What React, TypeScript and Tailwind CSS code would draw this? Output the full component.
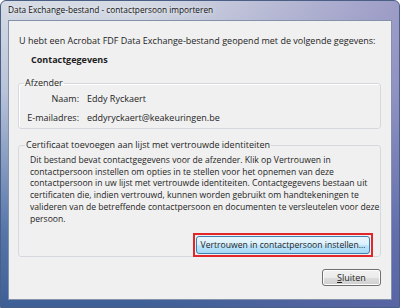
export default function App() {
  return (
    <div className="w-[400px] h-[308px] flex flex-col px-[7px] pb-[7px] rounded-t-[6px] overflow-hidden font-['Open_Sans',sans-serif] text-[9px] text-[#1e1e1e] bg-[image:linear-gradient(to_right,rgba(255,255,255,0)_35%,rgba(110,105,175,0.55)_100%),linear-gradient(to_bottom,#d6dbe4_0%,#b8c2d8_30%,#5676aa_75%,#3e5f96_100%)] border border-[#4a5f86]">
      <div className="h-[19px] flex items-center text-[8.3px] text-[#111] [text-shadow:0_0_4px_#ffffff]">
        Data Exchange-bestand - contactpersoon importeren
      </div>
      <div className="flex-1 flex flex-col bg-[#f0f0f0] border border-[#8491aa] pl-[9px] pr-[10px]">
        <p className="mt-[14px] ml-[1px] leading-[12px]">
          U hebt een Acrobat FDF Data Exchange-bestand geopend met de volgende gegevens:
        </p>
        <p className="mt-[7px] ml-[13px] leading-[12px] font-bold">Contactgegevens</p>

        <fieldset className="mt-[11px] h-[52px] border border-[#d5d9de] rounded-[3px] shadow-[inset_1px_1px_0_#ffffff]">
          <legend className="ml-[5px] px-[1px] leading-[12px]">Afzender</legend>
          <div className="grid grid-cols-[60px_1fr] gap-x-[8px] gap-y-[7px] mt-[4px] leading-[12px]">
            <span className="text-right">Naam:</span>
            <span>Eddy Ryckaert</span>
            <span className="text-right">E-mailadres:</span>
            <span>eddyryckaert@keakeuringen.be</span>
          </div>
        </fieldset>

        <fieldset className="mt-[10px] h-[118px] border border-[#d5d9de] rounded-[3px] flex flex-col">
          <legend className="ml-[6px] px-[1px] leading-[12px]">
            Certificaat toevoegen aan lijst met vertrouwde identiteiten
          </legend>
          <p className="mt-[4px] ml-[11px] text-[8.6px] leading-[11.7px] whitespace-nowrap">
            Dit bestand bevat contactgegevens voor de afzender. Klik op Vertrouwen in
            <br />
            contactpersoon instellen om opties in te stellen voor het opnemen van deze
            <br />
            contactpersoon in uw lijst met vertrouwde identiteiten. Contactgegevens bestaan uit
            <br />
            certificaten die, indien vertrouwd, kunnen worden gebruikt om handtekeningen te
            <br />
            valideren van de betreffende contactpersoon en documenten te versleutelen voor deze
            <br />
            persoon.
          </p>
          <div className="flex justify-end mt-[8px] mr-[7px]">
            <div className="border-2 border-[#e3262a] p-[1px]">
              <button className="w-[174px] h-[18px] rounded-[3px] border border-[#3c7fb1] bg-[linear-gradient(to_bottom,#eaf6fd_0%,#d9f0fc_50%,#bee6fd_51%,#a7d9f5_100%)] leading-[12px] text-[8.6px] whitespace-nowrap text-[#1e1e1e]">
                Vertrouwen in contactpersoon instellen...
              </button>
            </div>
          </div>
        </fieldset>

        <div className="flex justify-end mt-[12px]">
          <button className="w-[59px] h-[17px] rounded-[3px] border border-[#707070] bg-[linear-gradient(to_bottom,#f2f2f2_0%,#ebebeb_50%,#dddddd_51%,#cfcfcf_100%)] shadow-[inset_0_0_0_1px_#fcfcfc] leading-[12px]">
            <span className="underline">S</span>luiten
          </button>
        </div>
      </div>
    </div>
  );
}
